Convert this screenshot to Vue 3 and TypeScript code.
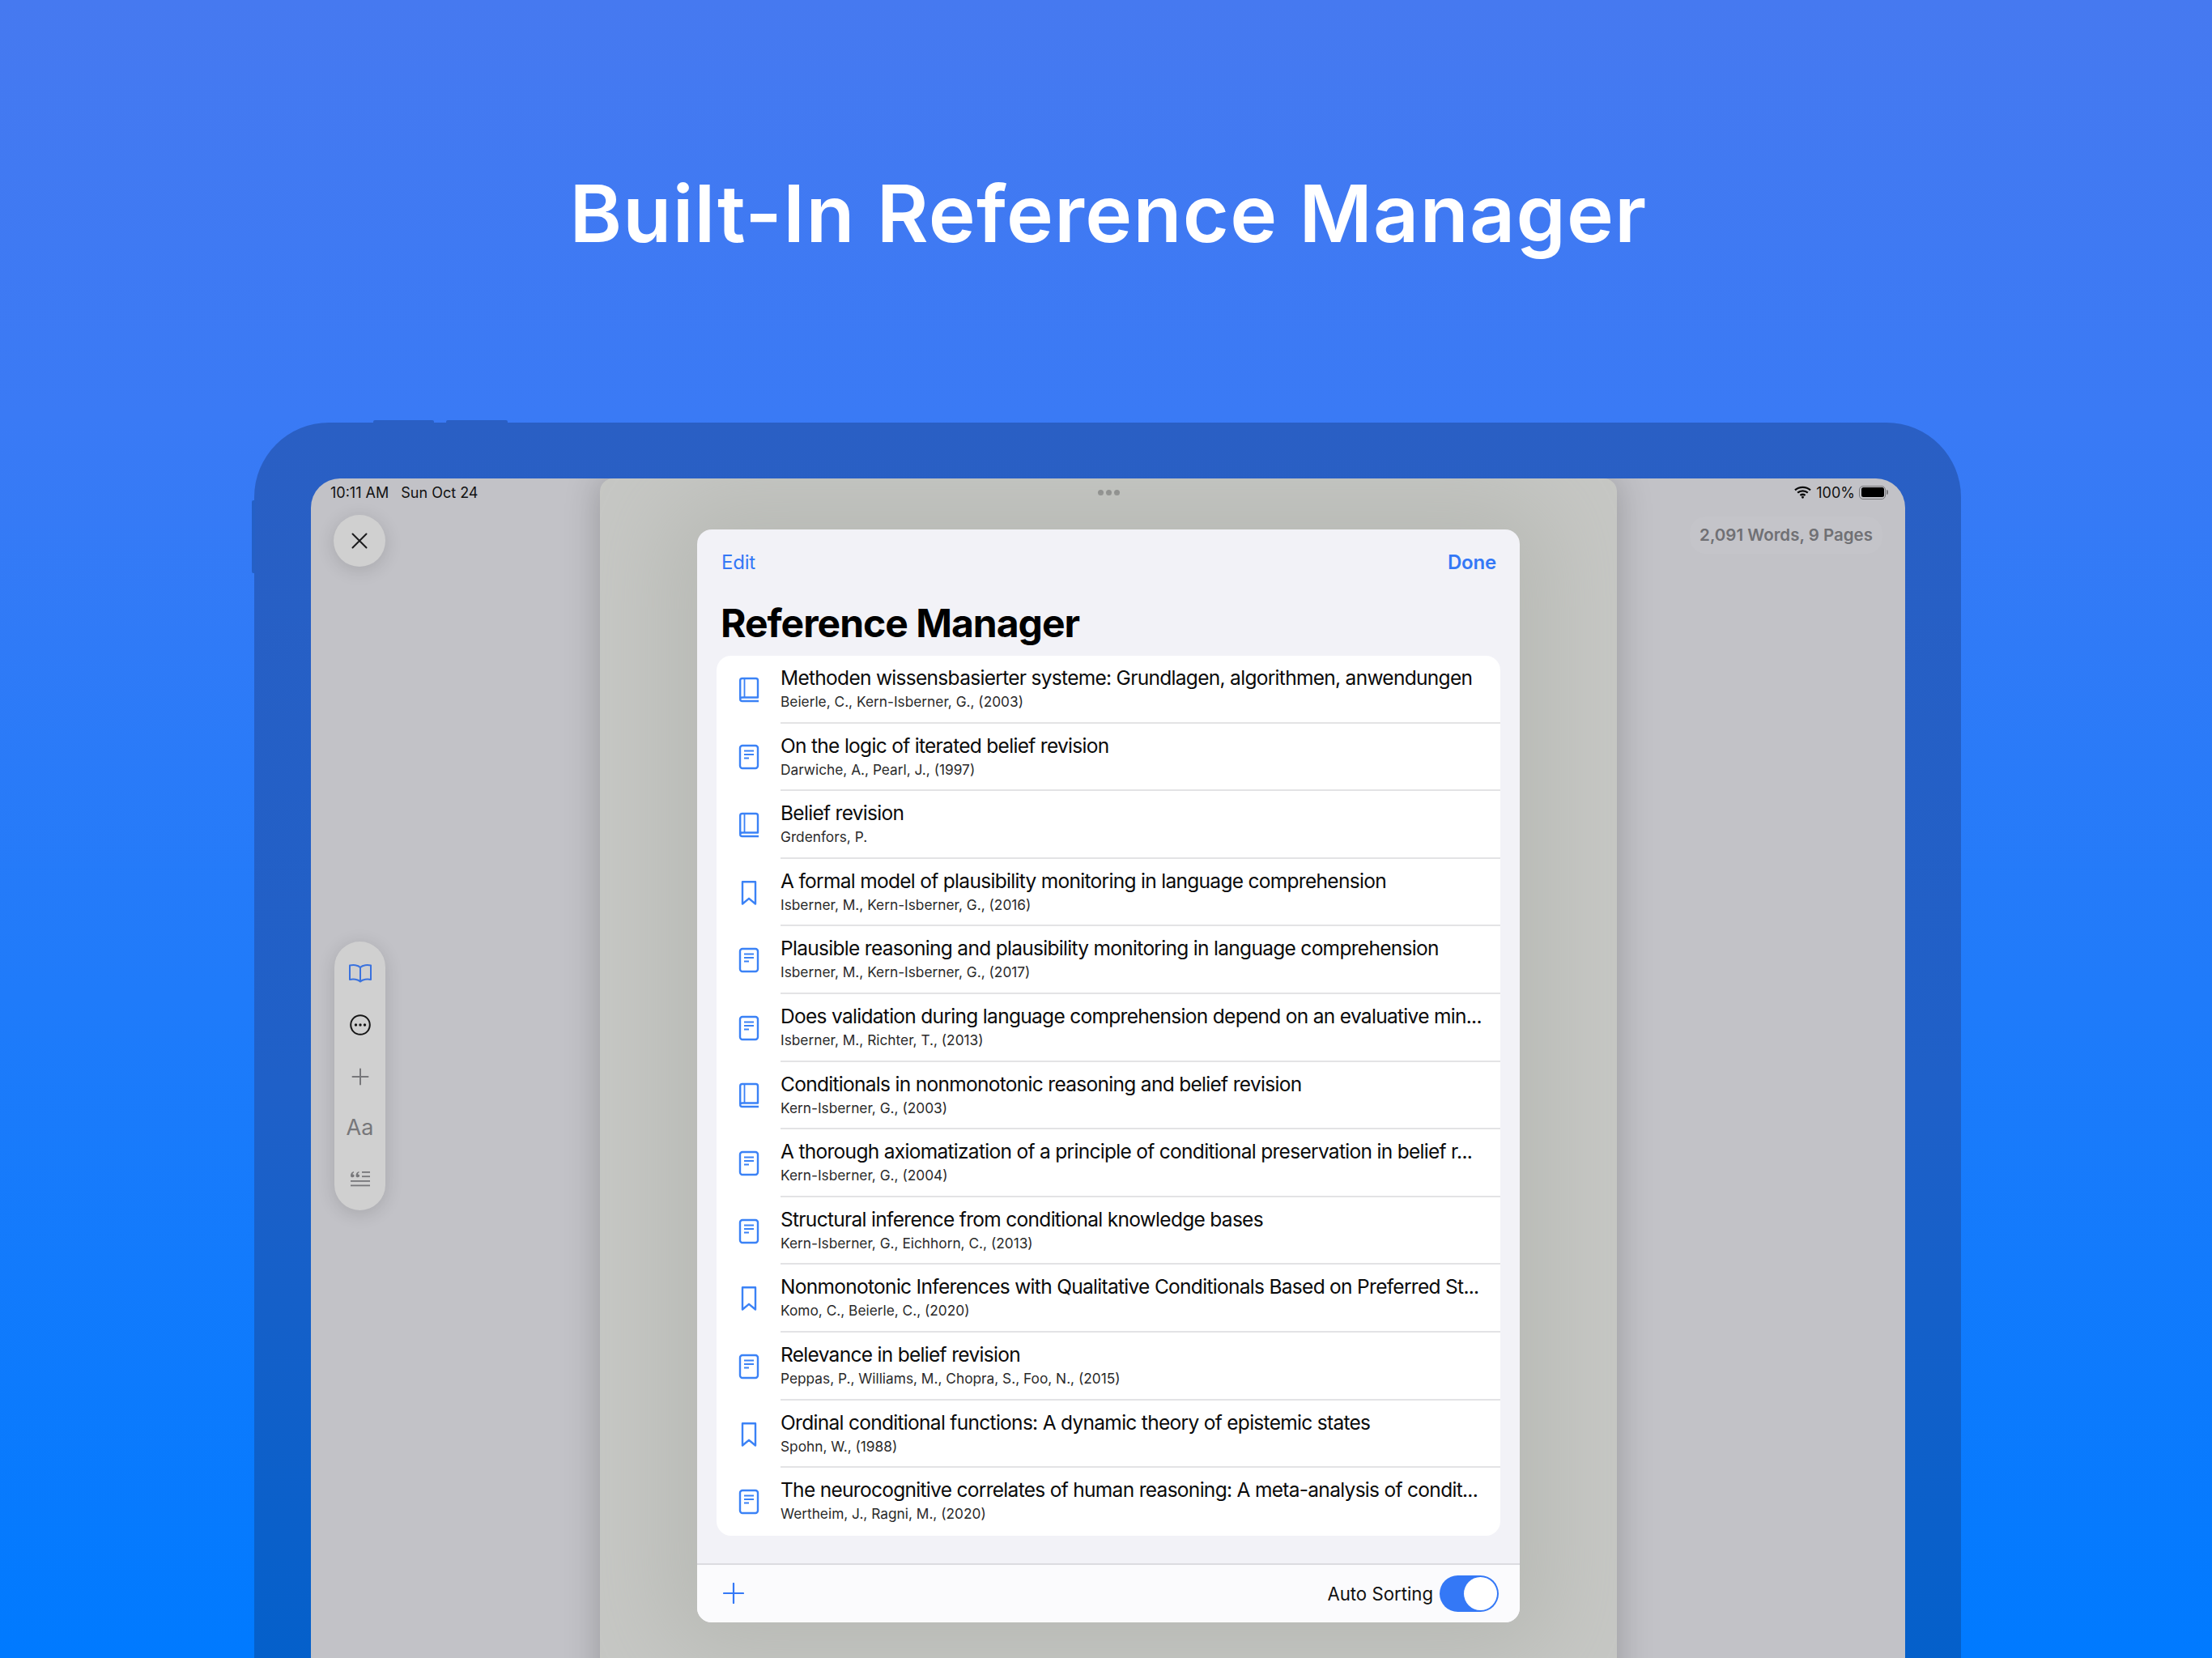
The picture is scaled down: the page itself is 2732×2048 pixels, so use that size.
<template>
  <div class="page">
    <header class="hero">
      <h1>Built-In Reference Manager</h1>
    </header>

    <div class="device">
      <i class="btn-vol one"></i>
      <i class="btn-vol two"></i>
      <i class="btn-side"></i>

      <div class="screen">
        <aside class="rail-left">
          <div class="status-left"><span>10:11 AM</span><span>Sun Oct 24</span></div>
          <button class="close">
            <svg width="24" height="24" viewBox="0 0 24 24"><path d="M3.5 3.5 20.5 20.5M20.5 3.5 3.5 20.5" stroke="#1b1b1d" stroke-width="2" stroke-linecap="round" /></svg>
          </button>
          <div class="tools">
            <svg width="30" height="24" viewBox="0 0 30 24" fill="none" stroke="#3a72de" stroke-width="2" stroke-linejoin="round">
              <path d="M15 5C12 1.800 6 1.500 2 2.500V20C6 19 12 19.500 15 22.500C18 19.500 24 19 28 20V2.500C24 1.500 18 1.800 15 5ZM15 5V22.500" />
            </svg>
            <svg width="28" height="28" viewBox="0 0 28 28">
              <circle cx="14" cy="14" r="11.800" fill="none" stroke="#151515" stroke-width="2" />
              <circle cx="8.500" cy="14" r="1.700" fill="#151515" /><circle cx="14" cy="14" r="1.700" fill="#151515" /><circle cx="19.500" cy="14" r="1.700" fill="#151515" />
            </svg>
            <svg width="24" height="24" viewBox="0 0 24 24"><path d="M12 2.500V21.500M2.500 12H21.500" stroke="#77777a" stroke-width="2" stroke-linecap="round" /></svg>
            <span class="aa">Aa</span>
            <svg width="26" height="24" viewBox="0 0 26 24" fill="#77777a">
              <path d="M1 7.500C1 4.500 2.500 2.500 5 2V3.600C4 4 3.500 4.600 3.400 5.400 4.800 5.300 5.600 6.100 5.600 7.300 5.600 8.500 4.700 9.300 3.400 9.300 2 9.300 1 8.700 1 7.500Z" />
              <path d="M7.500 7.500C7.500 4.500 9 2.500 11.500 2V3.600C10.500 4 10 4.600 9.900 5.400 11.300 5.300 12.100 6.100 12.100 7.300 12.100 8.500 11.200 9.300 9.900 9.300 8.500 9.300 7.500 8.700 7.500 7.500Z" />
              <rect x="15" y="2" width="10" height="1.800" /><rect x="15" y="7.300" width="10" height="1.800" />
              <rect x="1" y="13" width="24" height="1.800" /><rect x="1" y="18.500" width="24" height="1.800" />
            </svg>
          </div>
        </aside>

        <main class="panel">
          <div class="grabber"><i></i><i></i><i></i></div>
          <section class="sheet">
            <div class="nav">
              <span class="link">Edit</span>
              <span class="link strong">Done</span>
            </div>
            <h2>Reference Manager</h2>
            <ul class="refs">
              <li v-for="r in refs" :key="r.title" class="ref">
                <div class="ref-icon">
                  <svg v-if="r.kind === 'book'" width="26" height="32" viewBox="0 0 26 32" fill="none" stroke="#3b82f6" stroke-width="2.400" stroke-linejoin="round">
                    <path d="M2.200 27V4.500C2.200 3 3.200 2 4.700 2H21.500C23 2 24 3 24 4.500V25.500H5C3.300 25.500 2.200 26.300 2.200 27.800C2.200 29.100 3.200 30 4.700 30H25" />
                    <path d="M7.500 2.500V25" stroke-width="1.800" />
                  </svg>
                  <svg v-else-if="r.kind === 'doc'" width="26" height="32" viewBox="0 0 26 32" fill="none" stroke="#3b82f6" stroke-width="2.400">
                    <rect x="2" y="2" width="22" height="28" rx="3" />
                    <path d="M7 8.500H19M7 13H19M7 17.500H13" stroke-width="1.900" />
                  </svg>
                  <svg v-else width="22" height="32" viewBox="0 0 22 32" fill="none" stroke="#3b82f6" stroke-width="2.400" stroke-linejoin="round">
                    <path d="M3 2.200H19V29.500L11 22.800 3 29.500Z" />
                  </svg>
                </div>
                <div class="ref-text">
                  <div class="ref-title">{{ r.title }}</div>
                  <div class="ref-sub">{{ r.sub }}</div>
                </div>
              </li>
            </ul>
            <div class="toolbar">
              <svg width="26" height="26" viewBox="0 0 26 26"><path d="M13 1V25M1 13H25" stroke="#3478f6" stroke-width="2.200" stroke-linecap="round" /></svg>
              <div class="sorting">
                <span>Auto Sorting</span>
                <div class="switch"><i></i></div>
              </div>
            </div>
          </section>
        </main>

        <aside class="rail-right">
          <div class="status-right">
            <svg width="21" height="16" viewBox="0 0 21 16" fill="none" stroke="#0a0a0a" stroke-width="2.300">
              <path d="M1 5.300C6.300 .6 14.700 .6 20 5.300" />
              <path d="M4.200 8.700C7.700 5.700 13.300 5.700 16.800 8.700" />
              <path d="M7.400 11.900C9.200 10.500 11.800 10.500 13.600 11.900" />
              <circle cx="10.500" cy="14.300" r=".8" fill="#0a0a0a" stroke-width="1.300" />
            </svg>
            <span>100%</span>
            <div class="battery"><i></i></div>
            <b class="nub"></b>
          </div>
          <div class="counts">2,091 Words, 9 Pages</div>
        </aside>
      </div>
    </div>
  </div>
</template>

<script setup lang="ts">
type Kind = 'book' | 'doc' | 'mark'

interface Ref {
  kind: Kind
  title: string
  sub: string
}

const refs: Ref[] = [
  { kind: 'book', title: 'Methoden wissensbasierter systeme: Grundlagen, algorithmen, anwendungen', sub: 'Beierle, C., Kern-Isberner, G., (2003)' },
  { kind: 'doc', title: 'On the logic of iterated belief revision', sub: 'Darwiche, A., Pearl, J., (1997)' },
  { kind: 'book', title: 'Belief revision', sub: 'Grdenfors, P.' },
  { kind: 'mark', title: 'A formal model of plausibility monitoring in language comprehension', sub: 'Isberner, M., Kern-Isberner, G., (2016)' },
  { kind: 'doc', title: 'Plausible reasoning and plausibility monitoring in language comprehension', sub: 'Isberner, M., Kern-Isberner, G., (2017)' },
  { kind: 'doc', title: 'Does validation during language comprehension depend on an evaluative min...', sub: 'Isberner, M., Richter, T., (2013)' },
  { kind: 'book', title: 'Conditionals in nonmonotonic reasoning and belief revision', sub: 'Kern-Isberner, G., (2003)' },
  { kind: 'doc', title: 'A thorough axiomatization of a principle of conditional preservation in belief r...', sub: 'Kern-Isberner, G., (2004)' },
  { kind: 'doc', title: 'Structural inference from conditional knowledge bases', sub: 'Kern-Isberner, G., Eichhorn, C., (2013)' },
  { kind: 'mark', title: 'Nonmonotonic Inferences with Qualitative Conditionals Based on Preferred St...', sub: 'Komo, C., Beierle, C., (2020)' },
  { kind: 'doc', title: 'Relevance in belief revision', sub: 'Peppas, P., Williams, M., Chopra, S., Foo, N., (2015)' },
  { kind: 'mark', title: 'Ordinal conditional functions: A dynamic theory of epistemic states', sub: 'Spohn, W., (1988)' },
  { kind: 'doc', title: 'The neurocognitive correlates of human reasoning: A meta-analysis of condit...', sub: 'Wertheim, J., Ragni, M., (2020)' },
]
</script>

<style>
html, body {
  margin: 0;
  overflow: hidden;
}
</style>

<style scoped>
.page {
  width: 2732px;
  height: 2048px;
  overflow: hidden;
  background: linear-gradient(180deg, #4679f0 0%, #3a7af5 25%, #1f7bfa 60%, #007aff 100%);
  font-family: Inter, "Liberation Sans", sans-serif;
  color: #000;
}

.hero {
  height: 522px;
  box-sizing: border-box;
  padding: 199px 0 0 6px;
  text-align: center;
}

.hero h1 {
  margin: 0;
  font-size: 98px;
  line-height: 130px;
  font-weight: 600;
  letter-spacing: 1.300px;
  color: #fff;
}

.device {
  position: relative;
  margin-left: 314px;
  width: 2108px;
  height: 1640px;
  box-sizing: border-box;
  padding: 69px 69px 0 70px;
  border-radius: 92px 92px 0 0;
  background: linear-gradient(180deg, #2a5fc4 0%, #1f60c8 50%, #0060cb 100%);
}

.btn-vol {
  position: absolute;
  top: -3px;
  height: 4px;
  background: #2a5fc4;
  border-radius: 2px 2px 0 0;
}
.btn-vol.one { left: 147px; width: 75px; }
.btn-vol.two { left: 237px; width: 76px; }

.btn-side {
  position: absolute;
  left: -3px;
  top: 96px;
  width: 4px;
  height: 90px;
  background: #2560c6;
  border-radius: 2px 0 0 2px;
}

.screen {
  display: grid;
  grid-template-columns: 357px 1256px 356px;
  height: 1571px;
  border-radius: 36px 36px 0 0;
  background: #c2c2c7;
  overflow: hidden;
}

.rail-left {
  display: flex;
  flex-direction: column;
  align-items: flex-start;
}

.status-left {
  display: flex;
  gap: 15px;
  height: 34px;
  align-items: center;
  padding-left: 24px;
  font-size: 18px;
  color: #111;
}

.close {
  margin: 11px 0 0 28px;
  width: 64px;
  height: 64px;
  padding: 0;
  border: 0;
  border-radius: 50%;
  background: #d0d0d0;
  box-shadow: 0 4px 22px rgba(0, 0, 0, .14);
  display: flex;
  align-items: center;
  justify-content: center;
}

.tools {
  margin: 463px 0 0 29px;
  width: 63px;
  height: 332px;
  box-sizing: border-box;
  padding: 27px 0 26px;
  border-radius: 32px;
  background: #d0d0d0;
  box-shadow: 0 4px 22px rgba(0, 0, 0, .14);
  display: flex;
  flex-direction: column;
  align-items: center;
  justify-content: space-between;
}

.aa {
  font-size: 27px;
  line-height: 28px;
  color: #77777a;
}

.panel {
  position: relative;
  z-index: 1;
  display: flex;
  flex-direction: column;
  align-items: center;
  border-radius: 16px 16px 0 0;
  background: #c6c7c4;
  box-shadow: 0 0 44px rgba(0, 0, 0, .22);
  overflow: hidden;
}

.grabber {
  height: 63px;
  box-sizing: border-box;
  padding-top: 14px;
  display: flex;
  gap: 3px;
}

.grabber i {
  width: 7px;
  height: 7px;
  border-radius: 50%;
  background: #727272;
}

.sheet {
  width: 1016px;
  height: 1350px;
  box-sizing: border-box;
  border-radius: 18px;
  background: #f2f2f7;
  box-shadow: 0 0 110px 40px #b8bab5;
  display: flex;
  flex-direction: column;
}

.nav {
  display: flex;
  justify-content: space-between;
  padding: 25px 29px 0 30px;
  height: 56px;
  box-sizing: border-box;
  font-size: 24px;
  line-height: 32px;
  letter-spacing: -.2px;
}

.link { color: #3478f6; }
.link.strong { font-weight: 600; }

.sheet h2 {
  margin: 27px 0 0 29px;
  height: 73px;
  font-size: 48px;
  line-height: 66px;
  font-weight: 700;
  letter-spacing: -1px;
}

.refs {
  list-style: none;
  margin: 0 24px;
  padding: 0;
  background: #fff;
  border-radius: 18px;
  overflow: hidden;
}

.ref {
  display: flex;
  height: 83.615px;
}

.ref-icon {
  flex: none;
  width: 79px;
  display: flex;
  align-items: center;
  justify-content: center;
}

.ref-text {
  flex: 1;
  min-width: 0;
  border-bottom: 2px solid #e3e3e5;
  padding-top: 11px;
  white-space: nowrap;
}

.ref:last-child .ref-text { border-bottom: 0; }

.ref-title {
  font-size: 24.500px;
  line-height: 33px;
  letter-spacing: -.7px;
  color: #0b0b0b;
}

.ref-sub {
  margin-top: 1px;
  font-size: 17.300px;
  line-height: 24px;
  color: #2a2a2a;
}

.toolbar {
  margin-top: 34px;
  flex: 1;
  border-top: 2px solid #dcdce0;
  border-radius: 0 0 18px 18px;
  background: #fbfbfd;
  display: flex;
  align-items: center;
  justify-content: space-between;
  padding: 0 26px 0 32px;
}

.sorting {
  display: flex;
  align-items: center;
  gap: 8px;
  font-size: 22.200px;
  color: #111;
}

.switch {
  width: 73px;
  height: 45px;
  border-radius: 23px;
  background: #3478f6;
  display: flex;
  align-items: center;
  justify-content: flex-end;
  padding-right: 2px;
  box-sizing: border-box;
}

.switch i {
  width: 41px;
  height: 41px;
  border-radius: 50%;
  background: #fff;
}

.rail-right {
  display: flex;
  flex-direction: column;
  align-items: flex-end;
}

.status-right {
  height: 34px;
  display: flex;
  align-items: center;
  padding-right: 21px;
  font-size: 18px;
  color: #111;
}

.status-right span { margin: 0 5px 0 6px; }

.battery {
  width: 33px;
  height: 17px;
  box-sizing: border-box;
  border: 1.500px solid #77777a;
  border-radius: 5px;
  padding: 1.500px;
}

.battery i {
  display: block;
  height: 100%;
  border-radius: 2.500px;
  background: #000;
}

.nub {
  width: 2px;
  height: 6px;
  margin-left: 1px;
  border-radius: 0 2px 2px 0;
  background: #77777a;
}

.counts {
  margin: 13px 28px 0 0;
  height: 46px;
  box-sizing: border-box;
  padding: 0 12px;
  border-radius: 20px;
  background: rgba(255, 255, 255, .04);
  font-size: 20.500px;
  line-height: 46px;
  font-weight: 600;
  color: #707074;
}
</style>
